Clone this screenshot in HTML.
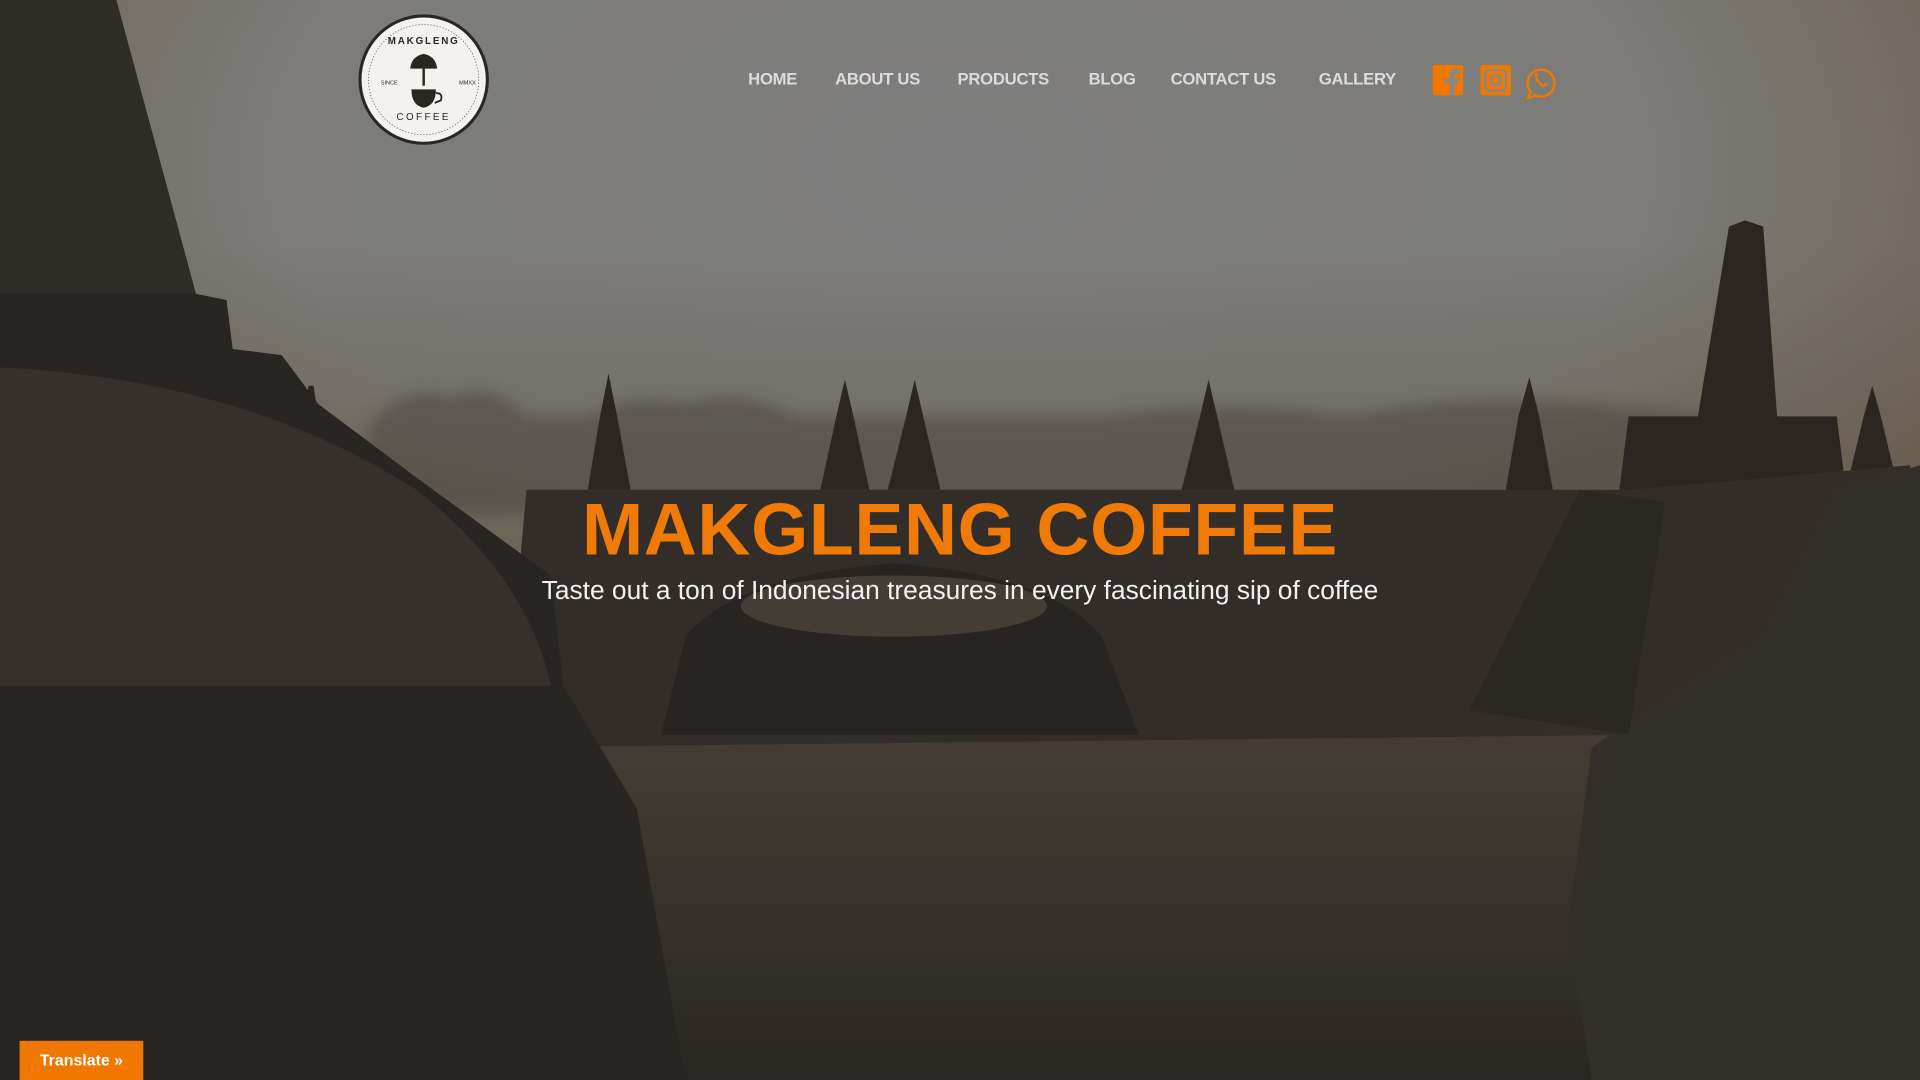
<!DOCTYPE html>
<html><head><meta charset="utf-8"><style>
html,body{margin:0;padding:0;width:1920px;height:1080px;overflow:hidden;background:#2a2826}
#w{position:absolute;left:0;top:0;width:1568px;height:882px;transform:scale(1.22449);transform-origin:0 0;font-family:"Liberation Sans",sans-serif}
.nav{position:absolute;top:57px;font-size:13.6px;font-weight:bold;color:#dcdcdc;letter-spacing:-0.2px}
h1{position:absolute;left:0;width:1568px;text-align:center;top:398px;margin:0;font-size:60px;font-weight:bold;color:#f07a06;letter-spacing:0.5px}
.sub{position:absolute;left:0;width:1568px;text-align:center;top:470px;font-size:21.5px;color:#f2f2f2}
.tr{position:absolute;left:16px;top:850px;width:101px;height:32px;background:#f07800;color:#fff;font-size:13px;font-weight:bold;text-align:center;line-height:32px}
</style></head><body><div id="w">
<svg width="1568" height="882" viewBox="0 0 1568 882" style="position:absolute;left:0;top:0">
<defs>
<radialGradient id="sky" cx="0.5" cy="0.15" r="0.8"><stop offset="0" stop-color="#898989"/><stop offset="0.45" stop-color="#878683"/><stop offset="0.7" stop-color="#7a6f60"/><stop offset="1" stop-color="#5e5446"/></radialGradient>
<linearGradient id="haze" x1="0" y1="0" x2="0" y2="1"><stop offset="0" stop-color="#6b6151" stop-opacity="0"/><stop offset="1" stop-color="#6b6151" stop-opacity="0.6"/></linearGradient>
<linearGradient id="fl" x1="0" y1="0" x2="0" y2="1"><stop offset="0" stop-color="#4a4239"/><stop offset="1" stop-color="#2e2a26"/></linearGradient>
<filter id="bl"><feGaussianBlur stdDeviation="6"/></filter>
</defs>
<rect width="1568" height="882" fill="url(#sky)"/>
<rect y="200" width="1568" height="250" fill="url(#haze)"/>
<path d="M300 350 Q330 310 370 325 Q400 310 430 340 L480 340 Q520 320 560 330 Q600 315 650 340 L900 340 Q1000 325 1100 340 Q1200 320 1300 330 L1400 340 L1400 420 L300 420Z" fill="#55504a" opacity="0.6" filter="url(#bl)"/>
<g fill="#2f2a25">
<path d="M480 400 L490 340 L497 305 L504 340 L515 400Z"/>
<path d="M670 400 L683 340 L690 310 L697 340 L710 400Z"/>
<path d="M725 400 L740 340 L747 310 L754 340 L768 400Z"/>
<path d="M965 400 L980 340 L987 310 L994 340 L1008 400Z"/>
<path d="M1228 410 L1240 340 L1249 308 L1257 340 L1270 410Z"/>
<path d="M1385 350 L1412 185 L1425 180 L1440 185 L1452 350Z"/>
<path d="M1330 340 L1500 340 L1520 500 L1310 500Z"/>
<path d="M1510 390 L1522 340 L1529 315 L1536 340 L1548 390Z"/>
<path d="M248 340 L252 315 L256 315 L260 340Z"/>
</g>
<path d="M410 620 L430 400 L1330 400 L1560 380 L1568 620Z" fill="#37312c"/>
<path d="M560 520 Q600 470 730 460 Q860 470 900 520 L930 600 L540 600Z" fill="#2c2824"/>
<ellipse cx="730" cy="495" rx="125" ry="25" fill="#4a433b"/>
<path d="M440 610 L1350 600 L1568 882 L560 882Z" fill="url(#fl)"/>
<path d="M0 0 L95 0 L160 240 L185 245 L190 285 L230 290 L260 330 L340 390 L450 470 L460 560 L520 660 L560 882 L0 882Z" fill="#2c2925"/>
<path d="M0 0 L95 0 L160 240 L0 240Z" fill="#33302b"/>
<path d="M0 300 Q200 310 340 400 Q430 470 450 560 L0 560Z" fill="#3a3530"/>
<path d="M1568 380 L1500 400 L1440 520 L1300 610 L1280 760 L1300 882 L1568 882Z" fill="#37322d"/>
<path d="M1200 580 L1290 400 L1360 410 L1330 600Z" fill="#2f2b27"/>
<rect width="1568" height="882" fill="#000" opacity="0.08"/>
<circle cx="346" cy="65" r="52" fill="#f4f2ee" stroke="#2a2622" stroke-width="2.5"/>
<circle cx="346" cy="65" r="45" fill="none" stroke="#555" stroke-width="0.6" stroke-dasharray="1 1.5"/>
<path d="M346 44 q-10 2 -11 12 l22 0 q-1 -10 -11 -12z" fill="#2a2622"/>
<rect x="345" y="56" width="2" height="14" fill="#2a2622"/>
<path d="M336 73 h20 q0 13 -10 15 q-10 -2 -10 -15z" fill="#2a2622"/>
<path d="M356 76 q6 0 4 6 l-5 2" fill="none" stroke="#2a2622" stroke-width="1.5"/>
<text x="346" y="98" font-size="8" text-anchor="middle" fill="#2a2622" font-family="Liberation Sans" letter-spacing="2">COFFEE</text>
<text x="346" y="36" font-size="8" font-weight="bold" text-anchor="middle" fill="#2a2622" font-family="Liberation Sans" letter-spacing="1.5">MAKGLENG</text>
<text x="311" y="69" font-size="4.5" fill="#2a2622" font-family="Liberation Sans">SINCE</text>
<text x="375" y="69" font-size="4.5" fill="#2a2622" font-family="Liberation Sans">MMXX</text>
<rect x="1170" y="53" width="25" height="25" rx="2" fill="#f07800"/>
<path d="M1184 78 v-10 h-4 v-4 h4 v-3 q0-5 5-5 h3 v4 h-2 q-2 0-2 2 v2 h4 l-1 4 h-3 v10z" fill="#888"/>
<rect x="1209" y="53" width="25" height="25" rx="2" fill="#f07800"/>
<rect x="1213" y="57" width="17" height="17" rx="4" fill="none" stroke="#888" stroke-width="2"/>
<circle cx="1221.5" cy="65.5" r="4" fill="none" stroke="#888" stroke-width="2"/>
<path d="M1250 75 l-2 5 l6 -2 A11 11 0 1 0 1250 75z" fill="none" stroke="#f07800" stroke-width="2"/>
<path d="M1255 60 q-2 5 5 10 q2 0 3 -2" fill="none" stroke="#f07800" stroke-width="2"/>
</svg>
<div class="nav" style="left:611px">HOME</div>
<div class="nav" style="left:682px">ABOUT US</div>
<div class="nav" style="left:782px">PRODUCTS</div>
<div class="nav" style="left:889px">BLOG</div>
<div class="nav" style="left:956px">CONTACT US</div>
<div class="nav" style="left:1077px">GALLERY</div>
<h1>MAKGLENG COFFEE</h1>
<div class="sub">Taste out a ton of Indonesian treasures in every fascinating sip of coffee</div>
<div class="tr">Translate »</div>
</div></body></html>
